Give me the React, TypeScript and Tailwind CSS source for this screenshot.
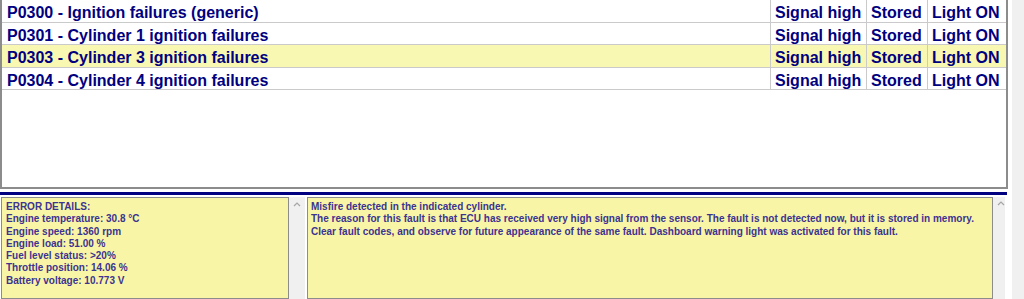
const faults = [
  { code: "P0300 - Ignition failures (generic)", active: false },
  { code: "P0301 - Cylinder 1 ignition failures", active: false },
  { code: "P0303 - Cylinder 3 ignition failures", active: true },
  { code: "P0304 - Cylinder 4 ignition failures", active: false },
];

const details = [
  "ERROR DETAILS:",
  "Engine temperature: 30.8 °C",
  "Engine speed: 1360 rpm",
  "Engine load: 51.00 %",
  "Fuel level status: >20%",
  "Throttle position: 14.06 %",
  "Battery voltage: 10.773 V",
];

const description = [
  "Misfire detected in the indicated cylinder.",
  "The reason for this fault is that ECU has received very high signal from the sensor. The fault is not detected now, but it is stored in memory.",
  "Clear fault codes, and observe for future appearance of the same fault. Dashboard warning light was activated for this fault.",
];

function ScrollUp({ className }: { className: string }) {
  return (
    <div className={className}>
      <svg width="16" height="14" viewBox="0 0 16 14" className="mx-auto">
        <polyline points="5,8 8,5 11,8" fill="none" stroke="#a6a6a6" strokeWidth="1.2" />
      </svg>
    </div>
  );
}

export default function App() {
  return (
    <div
      className="flex h-[299px] w-[1024px] overflow-hidden bg-white"
      style={{ fontFamily: '"Liberation Sans", Arial, sans-serif' }}
    >
      <div className="flex w-[1008px] shrink-0 flex-col">
        {/* fault list */}
        <div className="h-[189px] border-x-2 border-b-2 border-[#8c8c8c] bg-white">
          {faults.map((f) => (
            <div
              key={f.code}
              className={`flex h-[22.5px] border-b border-[#cacaca] text-[16px] font-bold leading-[20px] text-[#000080] ${
                f.active ? "bg-[#f9f8b2]" : "bg-white"
              }`}
            >
              <div className="flex-1 overflow-hidden whitespace-nowrap pl-[5px] pt-[3px]">{f.code}</div>
              <div className="w-[96px] whitespace-nowrap border-l border-[#cacaca] pl-[4px] pt-[3px]">Signal high</div>
              <div className="w-[61px] whitespace-nowrap border-l border-[#cacaca] pl-[4px] pt-[3px]">Stored</div>
              <div className="w-[79px] whitespace-nowrap border-l border-[#cacaca] pl-[4px] pt-[3px]">Light ON</div>
            </div>
          ))}
        </div>

        <div className="mt-[3px] h-[3px] w-[1007px] bg-[#000080]" />

        {/* detail panes */}
        <div className="mt-[2px] flex flex-1 pl-[1px] pr-[3px] text-[10px] font-bold leading-[12.3px] text-[#3d3391]">
          <div className="w-[288px] shrink-0 border border-[#8c8c8c] bg-[#f8f6a6] px-[4px] pt-[3px]">
            {details.map((d) => (
              <div key={d} className="whitespace-nowrap">
                {d}
              </div>
            ))}
          </div>
          <ScrollUp className="w-[16px] shrink-0 bg-[#f0f0f0] pt-[1px]" />
          <div className="ml-[2px] min-w-0 flex-1 overflow-hidden border border-[#8c8c8c] bg-[#f8f6a6] px-[3px] pt-[3px]">
            {description.map((d) => (
              <div key={d} className="whitespace-nowrap">
                {d}
              </div>
            ))}
          </div>
          <ScrollUp className="w-[12px] shrink-0 bg-[#f0f0f0] pt-0" />
        </div>
      </div>
      <div className="ml-[4px] w-[12px] bg-[#f0f0f0]" />
    </div>
  );
}
